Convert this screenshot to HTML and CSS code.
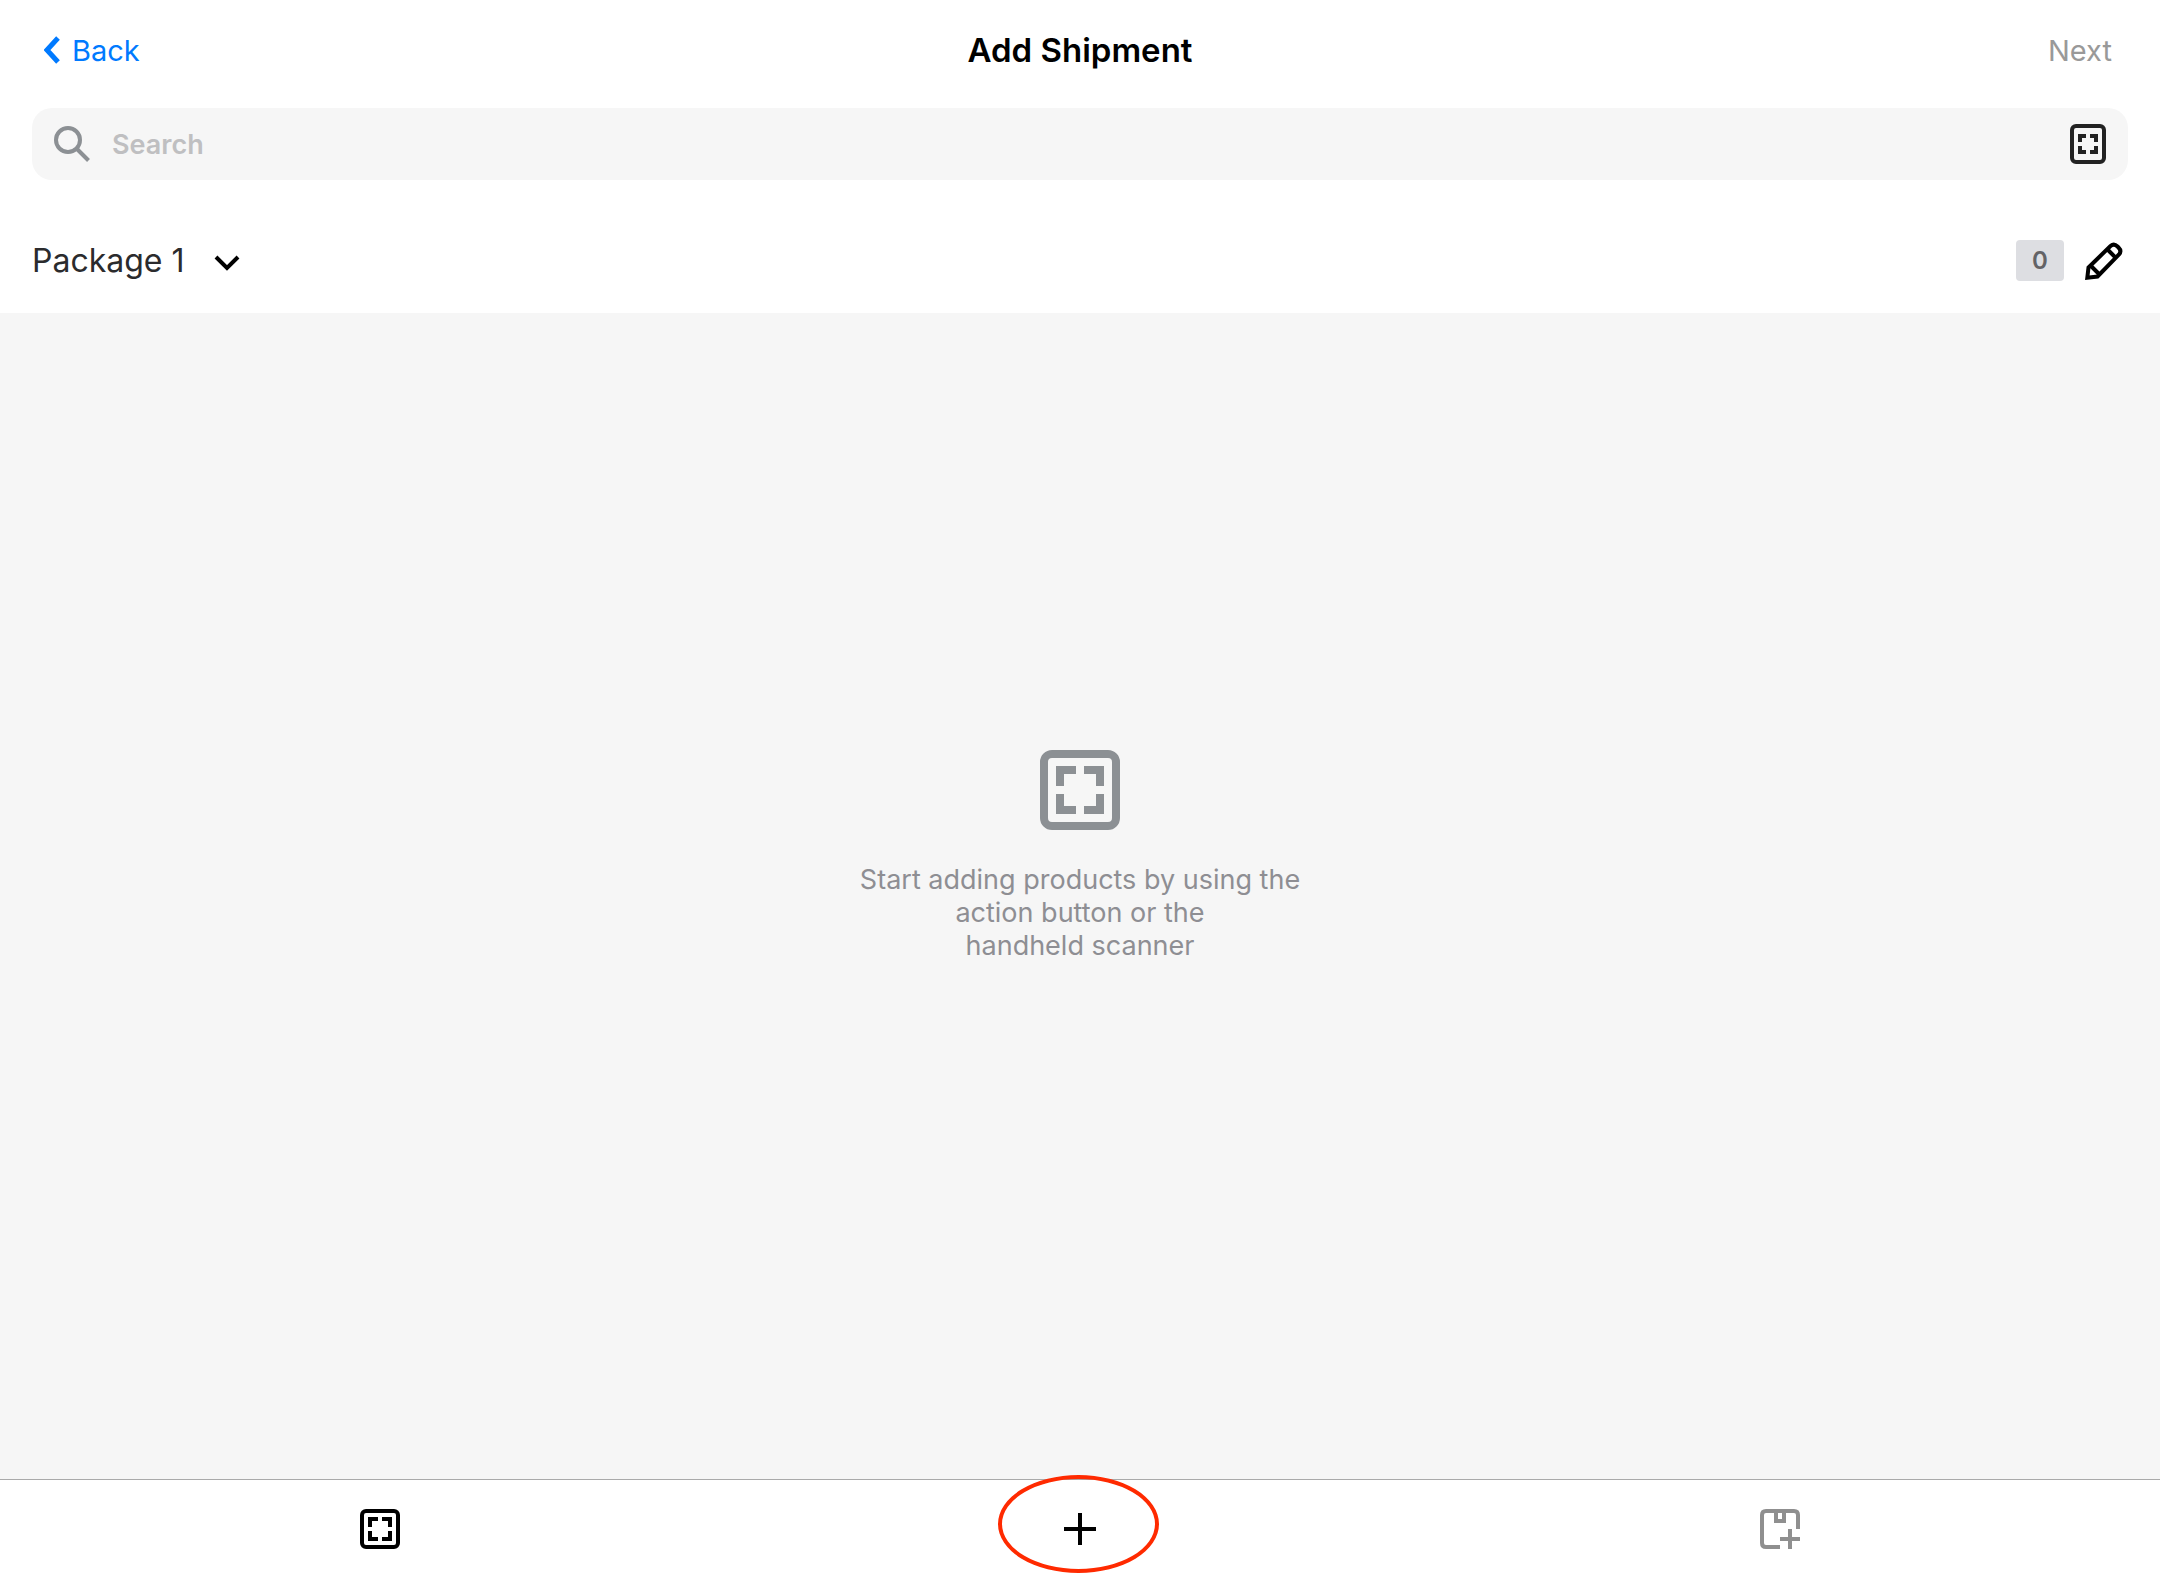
FILE: index.html
```html
<!DOCTYPE html>
<html lang="en">
<head>
    <meta charset="UTF-8">
    <meta name="viewport" content="width=device-width, initial-scale=1.0">
    <title>Add Shipment</title>
    <link rel="stylesheet" href="styles.css">
</head>
<body>
    <!-- Shared scan icon -->
    <svg class="sprite" aria-hidden="true">
        <symbol id="scan" viewBox="0 0 40 40">
            <rect x="2" y="2" width="36" height="36" rx="4" fill="none" stroke="currentColor" stroke-width="4"/>
            <path d="M8 8h10v4h-6v6H8zM22 8h10v10h-4v-6h-6zM28 22h4v10H22v-4h6zM8 22h4v6h6v4H8z" fill="currentColor"/>
        </symbol>
    </svg>

    <header class="navbar">
        <a class="back" href="#">
            <svg width="16" height="28" viewBox="0 0 16 28" fill="none" stroke="currentColor" stroke-width="5"><path d="M14 2L3 14l11 12"/></svg>
            Back
        </a>
        <h1>Add Shipment</h1>
        <button class="next" type="button" disabled>Next</button>
    </header>

    <div class="search">
        <svg width="36" height="36" viewBox="0 0 36 36" fill="none" stroke="currentColor" stroke-width="4">
            <circle cx="14" cy="14" r="12"/>
            <path d="M22.500 22.500L34.500 34.500"/>
        </svg>
        <input type="search" placeholder="Search" aria-label="Search">
        <button type="button" aria-label="Scan barcode">
            <svg width="36" height="40" viewBox="0 0 36 40" fill="none" stroke="currentColor" stroke-width="4">
                <rect x="2" y="2" width="32" height="36" rx="4"/>
                <path d="M10 18v-6h6M20 12h6v6M26 22v6h-6M16 28h-6v-6"/>
            </svg>
        </button>
    </div>

    <div class="package">
        <label class="package-picker">
            <select aria-label="Package">
                <option>Package 1</option>
            </select>
            <svg width="26" height="20" viewBox="0 0 26 20" fill="none" stroke="currentColor" stroke-width="4"><path d="M2 6l11 11L24 6"/></svg>
        </label>
        <span class="badge">0</span>
        <button type="button" aria-label="Edit package">
            <svg width="38" height="38" viewBox="0 0 38 38" fill="none" stroke="currentColor" stroke-width="4">
                <path d="M2.300 35.700L3.500 25.500L25.500 4Q29 1 32.500 4.500L33.500 5.500Q37 9 34 12.500L12.500 34.500Z"/>
                <path d="M5.500 23.500L14.500 32.500M22 7L31 16"/>
            </svg>
        </button>
    </div>

    <main class="empty">
        <svg width="80" height="80"><use href="#scan"/></svg>
        <p>Start adding products by using the<br>action button or the<br>handheld scanner</p>
    </main>

    <footer class="toolbar">
        <button type="button" aria-label="Scan">
            <svg width="40" height="40"><use href="#scan"/></svg>
        </button>
        <button class="add" type="button" aria-label="Add product">
            <svg width="32" height="32" viewBox="0 0 32 32" stroke="currentColor" stroke-width="4"><path d="M16 0v32M0 16h32"/></svg>
            <span class="highlight"></span>
        </button>
        <button type="button" aria-label="Add package" disabled>
            <svg width="40" height="40" viewBox="0 0 40 40" fill="none" stroke="currentColor" stroke-width="4">
                <path d="M38 20V6q0-4-4-4H6Q2 2 2 6v28q0 4 4 4h14"/>
                <path d="M16 2v10h8V2M30 20v20M20 30h20"/>
            </svg>
        </button>
    </footer>
</body>
</html>
```

FILE: styles.css
```css
* {
    box-sizing: border-box;
}
body {
    display: flex;
    flex-direction: column;
    min-height: 100vh;
    margin: 0;
    background: #fff;
    color: #000;
    font-family: Inter, 'Liberation Sans', sans-serif;
    font-size: 29px;
}
svg {
    display: block;
    flex: none;
}
button, input, select {
    padding: 0;
    border: none;
    background: none;
    color: inherit;
    font: inherit;
}
.sprite {
    position: absolute;
    width: 0;
    height: 0;
}

/* Top bar */
.navbar {
    display: grid;
    grid-template-columns: 1fr auto 1fr;
    align-items: center;
    height: 100px;
    padding: 0 44px;
}
.navbar h1 {
    margin: 0;
    font-size: 33px;
    font-weight: 600;
}
.back {
    display: flex;
    align-items: center;
    gap: 12px;
    color: #007aff;
    text-decoration: none;
}
.next {
    justify-self: end;
    padding-right: 4px;
    color: #999;
}

.search {
    display: flex;
    align-items: center;
    gap: 22px;
    height: 72px;
    margin: 8px 32px 0;
    padding: 0 22px;
    border-radius: 20px;
    background: #f6f6f6;
    color: #8c9094;
}
.search input {
    flex: 1;
    min-width: 0;
    outline: none;
    color: #222;
    font-size: 27px;
    font-weight: 600;
}
.search input::placeholder {
    color: #bfbfc1;
}
.search button {
    color: #222;
}

/* Package row */
.package {
    display: flex;
    align-items: center;
    height: 133px;
    padding: 28px 37px 0 32px;
}
.package-picker {
    display: flex;
    align-items: center;
    gap: 29px;
    margin-right: auto;
}
.package-picker select {
    appearance: none;
    color: #2b2b2d;
    font-size: 32px;
}
.badge {
    min-width: 48px;
    margin-right: 21px;
    border-radius: 4px;
    background: #dddee2;
    color: #636366;
    font-size: 24px;
    font-weight: 600;
    line-height: 41px;
    text-align: center;
}

/* Empty list message */
.empty {
    display: flex;
    flex: 1;
    flex-direction: column;
    align-items: center;
    justify-content: center;
    gap: 33px;
    padding-bottom: 81px;
    background: #f6f6f6;
    color: #8c9094;
}
.empty p {
    margin: 0;
    color: #8e8e93;
    font-size: 27px;
    line-height: 33px;
    text-align: center;
}

/* Bottom bar */
.toolbar {
    display: flex;
    height: 101px;
    padding: 0 30px 2px;
    border-top: 1px solid #aaa;
}
.toolbar button {
    display: flex;
    flex: 1;
    align-items: center;
    justify-content: center;
}
.toolbar button:disabled {
    color: #8f8f8f;
}
.add {
    position: relative;
}
.highlight {
    position: absolute;
    top: -5px;
    left: calc(50% - 82px);
    width: 161px;
    height: 98px;
    border: 4px solid #ff2a00;
    border-radius: 50%;
}
```
